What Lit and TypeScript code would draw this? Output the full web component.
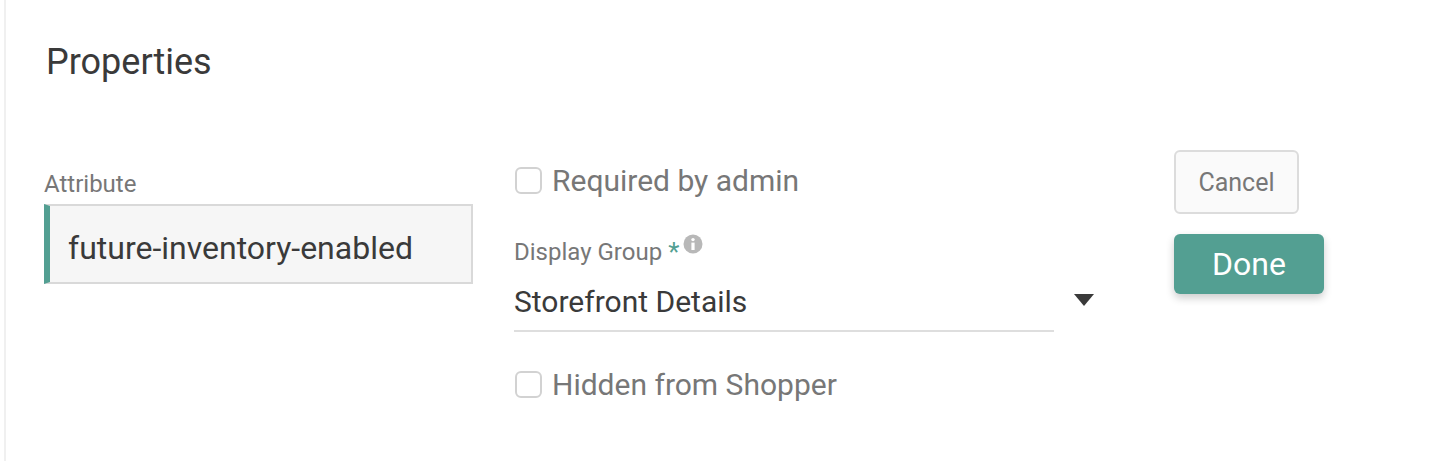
import { LitElement, html, css } from "lit";
import { customElement } from "lit/decorators.js";

@customElement("app-root")
export class AppRoot extends LitElement {
  static styles = css`
    :host {
      display: block;
      width: 1443px;
      height: 461px;
      overflow: hidden;
      background: #fff;
      font-family: Roboto, "Liberation Sans", sans-serif;
      box-sizing: border-box;
    }
    .panel {
      box-sizing: border-box;
      height: 461px;
      margin-left: 4px;
      border-left: 2px solid #f0f0f0;
      padding: 41px 0 0 38px;
    }
    h2 {
      margin: 0 0 0 2px;
      font-size: 36px;
      line-height: 42px;
      font-weight: 400;
      color: #3a3a3a;
    }
    .row {
      display: flex;
      align-items: flex-start;
      margin-top: 67px;
    }
    .attr {
      width: 429px;
      margin-top: 18px;
      flex: none;
    }
    .lab {
      font-size: 24px;
      line-height: 32px;
      color: #777;
      display: block;
    }
    .input {
      box-sizing: border-box;
      height: 80px;
      margin-top: 4px;
      background: #f6f6f6;
      border: 2px solid #d9d9d9;
      border-left: 6px solid #539f92;
      padding: 8px 0 0 18px;
      display: flex;
      align-items: center;
      font-size: 32px;
      color: #3a3a3a;
    }
    .mid {
      margin-left: 41px;
      width: 660px;
      flex: none;
    }
    .check {
      display: flex;
      align-items: center;
      gap: 10px;
      height: 40px;
      font-size: 30px;
      color: #777;
      margin-top: 10px;
    }
    .box {
      box-sizing: border-box;
      width: 27px;
      height: 27px;
      margin-left: 1px;
      border: 2px solid #d2d2d2;
      border-radius: 6px;
      background: #fff;
      flex: none;
    }
    .group {
      display: flex;
      align-items: flex-start;
      margin-top: 36px;
      font-size: 24px;
      line-height: 32px;
      color: #777;
    }
    .star {
      color: #539f92;
      margin-left: 6px;
      font-size: 26px;
    }
    .info {
      margin: -2px 0 0 4px;
      display: block;
    }
    .select {
      display: flex;
      align-items: flex-end;
      margin-top: 14px;
    }
    .value {
      box-sizing: border-box;
      width: 540px;
      height: 50px;
      border-bottom: 2px solid #dedede;
      font-size: 30px;
      line-height: 40px;
      color: #3a3a3a;
    }
    .arrow {
      margin: 0 0 26px 20px;
      display: block;
    }
    .hidden {
      margin-top: 32px;
    }
    .actions {
      display: flex;
      flex-direction: column;
      align-items: flex-start;
      gap: 20px;
    }
    button {
      font-family: inherit;
      box-sizing: border-box;
      padding: 0;
      cursor: pointer;
    }
    .cancel {
      width: 125px;
      height: 64px;
      background: #fafafa;
      border: 2px solid #dcdcdc;
      border-radius: 6px;
      font-size: 25px;
      color: #777;
    }
    .done {
      width: 150px;
      height: 60px;
      background: #539f92;
      border: none;
      border-radius: 6px;
      font-size: 32px;
      color: #fff;
      box-shadow: 0 4px 8px rgba(0, 0, 0, 0.2);
    }
  `;

  render() {
    return html`
      <div class="panel">
        <h2>Properties</h2>
        <div class="row">
          <div class="attr">
            <span class="lab">Attribute</span>
            <div class="input">future-inventory-enabled</div>
          </div>
          <div class="mid">
            <label class="check"><span class="box"></span>Required by admin</label>
            <div class="group">
              <span>Display Group</span><span class="star">*</span>
              <svg class="info" width="20" height="20" viewBox="0 0 20 20">
                <circle cx="10" cy="10" r="9.5" fill="#b8b8b8" />
                <circle cx="10" cy="5.6" r="1.7" fill="#fff" />
                <rect x="8.4" y="8.6" width="3.2" height="7.4" fill="#fff" />
              </svg>
            </div>
            <div class="select">
              <div class="value">Storefront Details</div>
              <svg class="arrow" width="20" height="12" viewBox="0 0 20 12">
                <path d="M0 0H20L10 12Z" fill="#3a3a3a" />
              </svg>
            </div>
            <label class="check hidden"><span class="box"></span>Hidden from Shopper</label>
          </div>
          <div class="actions">
            <button class="cancel">Cancel</button>
            <button class="done">Done</button>
          </div>
        </div>
      </div>
    `;
  }
}
